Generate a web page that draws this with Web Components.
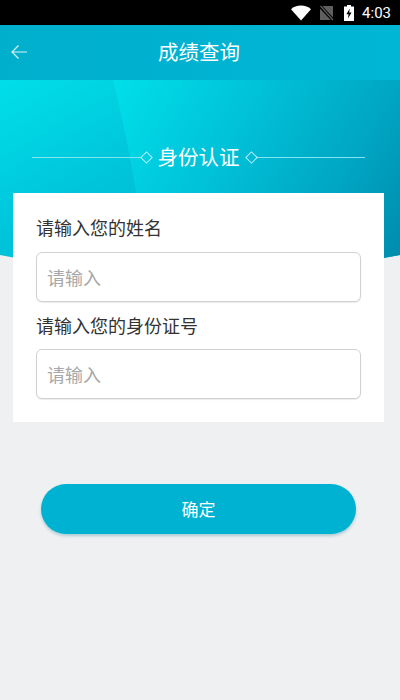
<!DOCTYPE html>
<html lang="zh">
<head>
<meta charset="utf-8">
<title>成绩查询</title>
<style>
  html, body { margin: 0; height: 100%; }
  body {
    background: #eef0f2;
    font-family: "Noto Sans CJK SC", "Noto Sans", sans-serif;
  }
</style>
</head>
<body>
<status-bar></status-bar>
<app-bar title="成绩查询"></app-bar>
<hero-banner title="身份认证"></hero-banner>
<form-card>
  <form-field label="请输入您的姓名" placeholder="请输入"></form-field>
  <form-field label="请输入您的身份证号" placeholder="请输入"></form-field>
</form-card>
<primary-button>确定</primary-button>

<script>
class StatusBar extends HTMLElement {
  constructor() {
    super();
    this.attachShadow({ mode: "open" });
    this.shadowRoot.innerHTML = `
      <style>
        :host {
          display: flex;
          align-items: center;
          justify-content: flex-end;
          height: 25px;
          background: #000;
          color: #fff;
          padding-right: 9px;
          font: 15px Roboto, sans-serif;
        }
        svg { display: block; }
        .wifi { margin-right: 8px; }
        .sim { margin-right: 10px; }
        .battery { margin-right: 8px; }
      </style>
      <svg class="wifi" width="20" height="16" viewBox="0 0 20 16"><path d="M0 4.2C2.6 1.8 6 .6 10 .6s7.4 1.2 10 3.6L10 15.6z" fill="#fff"/></svg>
      <svg class="sim" width="15" height="16" viewBox="0 0 15 16"><path d="M4 1h10v14H1V4z" fill="#5f5f5f"/><path d="M1 1l13 14" stroke="#000" stroke-width="3.4"/><path d="M1.5 1l12.5 14" stroke="#5f5f5f" stroke-width="1.2"/></svg>
      <svg class="battery" width="10" height="16" viewBox="0 0 10 16"><path d="M3 0h4v1.5h3V16H0V1.5h3z" fill="#fff"/><path d="M5.8 3.5L2.4 9.2h2.2L3.9 13.5l3.7-6H5.2z" fill="#000"/></svg>
      <span>4:03</span>
    `;
  }
}

class AppBar extends HTMLElement {
  constructor() {
    super();
    this.attachShadow({ mode: "open" });
    this.shadowRoot.innerHTML = `
      <style>
        :host {
          display: flex;
          align-items: center;
          justify-content: center;
          position: relative;
          height: 55px;
          padding: 0 2px 3px 0;
          box-sizing: border-box;
          background: linear-gradient(90deg, #00afcc, #00b6d5);
          color: #fff;
          font-size: 20.5px;
        }
        svg { position: absolute; left: 10px; top: 18px; }
      </style>
      <svg width="18" height="18" viewBox="0 0 18 18" fill="none" stroke="#d8f6fb" stroke-width="1.2"><path d="M17 9H2M8.5 2.5L2 9l6.5 6.5"/></svg>
      <span id="title"></span>
    `;
  }

  connectedCallback() {
    this.shadowRoot.querySelector("#title").textContent = this.getAttribute("title");
  }
}

class HeroBanner extends HTMLElement {
  constructor() {
    super();
    this.attachShadow({ mode: "open" });
    this.shadowRoot.innerHTML = `
      <style>
        :host {
          display: block;
          position: relative;
          height: 179px;
          overflow: hidden;
          background: linear-gradient(150deg, #00dfe9 0%, #00c9dd 32%, #00aeca 75%);
          clip-path: path("M0 0H400V175Q200 215 0 175Z");
          color: #fff;
          font-size: 20.5px;
        }
        .sheen {
          position: absolute;
          inset: 0;
          background: linear-gradient(120deg, #00e0ea 22%, #00c6db 48%, #00a5c3 80%, #008cae 100%);
          clip-path: path("M113 0H400V179H146Q132 75 113 0Z");
        }
        .heading {
          position: relative;
          display: flex;
          align-items: center;
          margin: 62px 35px 0 32px;
          height: 30px;
        }
        .line { flex: 1; height: 1px; background: #7fe6f2; }
        .diamond {
          width: 7px;
          height: 7px;
          border: 1px solid #b9f1f7;
          transform: rotate(45deg);
        }
        .left { margin-right: 7px; }
        .right { margin-left: 7px; }
        #title { padding-bottom: 2px; }
      </style>
      <div class="sheen"></div>
      <div class="heading">
        <div class="line"></div>
        <div class="diamond left"></div>
        <span id="title"></span>
        <div class="diamond right"></div>
        <div class="line"></div>
      </div>
    `;
  }

  connectedCallback() {
    this.shadowRoot.querySelector("#title").textContent = this.getAttribute("title");
  }
}

class FormCard extends HTMLElement {
  constructor() {
    super();
    this.attachShadow({ mode: "open" });
    this.shadowRoot.innerHTML = `
      <style>
        :host {
          display: flex;
          flex-direction: column;
          gap: 9px;
          position: relative;
          box-sizing: border-box;
          width: 371px;
          height: 229px;
          margin: -66px 0 0 13px;
          padding: 20px 23px 0;
          background: #fff;
        }
      </style>
      <slot></slot>
    `;
  }
}

class FormField extends HTMLElement {
  constructor() {
    super();
    this.attachShadow({ mode: "open" });
    this.shadowRoot.innerHTML = `
      <style>
        :host { display: block; }
        label {
          display: block;
          height: 29px;
          margin-bottom: 10px;
          line-height: 29px;
          font-size: 18px;
          color: #333;
        }
        :host(:last-child) label { margin-bottom: 9px; }
        input {
          display: block;
          box-sizing: border-box;
          width: 325px;
          height: 50px;
          padding: 0 10px;
          border: 1px solid #cfd2d4;
          border-radius: 6px;
          outline: none;
          background: #fff;
          box-shadow: 0 1px 1px rgba(0, 0, 0, 0.08);
          font: 18px "Noto Sans CJK SC", sans-serif;
        }
        input::placeholder { color: #a8a8a8; opacity: 1; }
      </style>
      <label for="field"></label>
      <input id="field" type="text">
    `;
  }

  connectedCallback() {
    this.shadowRoot.querySelector("label").textContent = this.getAttribute("label");
    this.shadowRoot.querySelector("input").placeholder = this.getAttribute("placeholder");
  }
}

class PrimaryButton extends HTMLElement {
  constructor() {
    super();
    this.attachShadow({ mode: "open" });
    this.shadowRoot.innerHTML = `
      <style>
        :host {
          display: flex;
          align-items: center;
          justify-content: center;
          box-sizing: border-box;
          width: 315px;
          height: 50px;
          margin: 62px 0 0 41px;
          padding-bottom: 2px;
          border-radius: 25px;
          background: #00b2d1;
          box-shadow: 0 2px 3px rgba(0, 110, 130, 0.28);
          color: #fff;
          font-size: 17px;
        }
      </style>
      <slot></slot>
    `;
  }
}

customElements.define("status-bar", StatusBar);
customElements.define("app-bar", AppBar);
customElements.define("hero-banner", HeroBanner);
customElements.define("form-card", FormCard);
customElements.define("form-field", FormField);
customElements.define("primary-button", PrimaryButton);
</script>
</body>
</html>
